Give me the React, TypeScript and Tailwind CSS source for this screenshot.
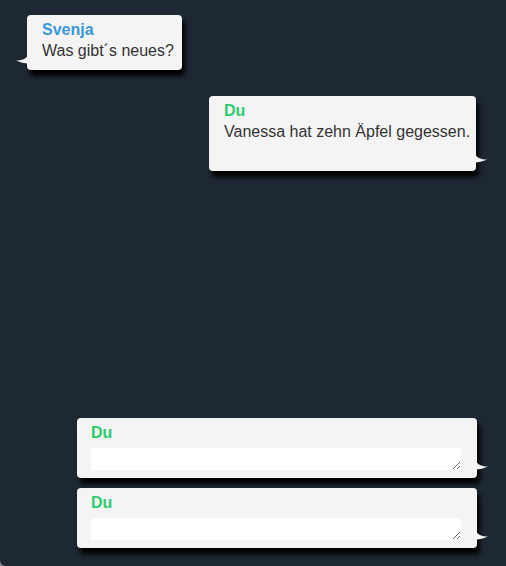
const TailLeft = () => (
    <svg className="absolute -left-[11px] bottom-[6px]" width="12" height="9" viewBox="0 0 12 9">
        <path d="M12 0 C 10 4, 6 5.5, 0 5.5 C 4 7.5, 9 8.5, 12 8.5 Z" fill="#f4f4f4" />
    </svg>
)

const TailRight = () => (
    <svg className="absolute -right-[11px] bottom-[8px]" width="12" height="9" viewBox="0 0 12 9">
        <path d="M0 0 C 2 4, 6 5.5, 12 5.5 C 8 7.5, 3 8.5, 0 8.5 Z" fill="#f4f4f4" />
    </svg>
)

const Composer = ({ focus }: { focus?: boolean }) => (
    <div className="relative w-[400px] rounded-[4px] bg-[#f4f4f4] pl-[14px] pr-[16px] pt-[6px] pb-[8px] shadow-[3px_6px_5px_rgba(0,0,0,1)]">
        <div className="text-[16px] leading-[18px] font-bold text-[#2ecc71]">Du</div>
        <textarea
            autoFocus={focus}
            rows={1}
            className="mt-[6px] block h-[22px] w-full bg-white px-[2px] text-[15px] leading-[18px] text-[#333] caret-black outline-none"
        />
        <TailRight />
    </div>
)

export default function App() {
    return (
        <div className="h-screen w-full bg-[#7a7f85]" style={{ fontFamily: '"Liberation Sans", Arial, sans-serif' }}>
            <div className="flex h-full flex-col justify-between rounded-bl-[6px] bg-[#1e2833] pb-[18px]">
                <div className="flex flex-col pt-[15px]">
                    <div className="relative ml-[27px] self-start rounded-[4px] bg-[#f4f4f4] pl-[15px] pr-[8px] pt-[6px] pb-[10px] shadow-[3px_6px_5px_rgba(0,0,0,1)]">
                        <div className="text-[16px] leading-[18px] font-bold text-[#3a97d8]">Svenja</div>
                        <div className="mt-[3px] text-[16px] leading-[18px] text-[#333]">Was gibt´s neues?</div>
                        <TailLeft />
                    </div>
                    <div className="relative mt-[26px] mr-[30px] w-[267px] self-end whitespace-nowrap rounded-[4px] bg-[#f4f4f4] pl-[15px] pt-[6px] pb-[30px] shadow-[3px_6px_5px_rgba(0,0,0,1)]">
                        <div className="text-[16px] leading-[18px] font-bold text-[#2ecc71]">Du</div>
                        <div className="mt-[3px] text-[16px] leading-[18px] text-[#333]">Vanessa hat zehn Äpfel gegessen.</div>
                        <TailRight />
                    </div>
                </div>
                <div className="flex flex-col items-end gap-[10px] pr-[29px]">
                    <Composer focus />
                    <Composer />
                </div>
            </div>
        </div>
    )
}
